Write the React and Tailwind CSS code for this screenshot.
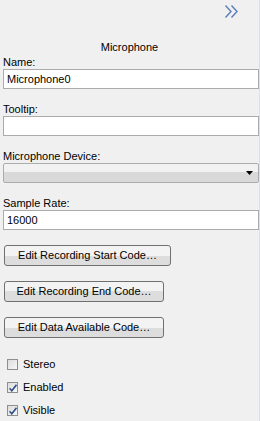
const font = { fontFamily: '"Liberation Sans", Arial, sans-serif' }

const Label = ({ children, className = '' }) => (
    <div className={`pl-[3px] text-[11px] leading-[13px] text-black ${className}`}>{children}</div>
)

const TextBox = ({ value }) => (
    <div className="ml-[3px] flex h-[20px] w-[256px] items-center border border-[#ababab] bg-white px-[3px] text-[11px] text-black">
        {value}
    </div>
)

const Button = ({ children, width }) => (
    <div
        className={`ml-[4px] flex h-[21px] ${width} items-center justify-center rounded-[3px] border border-[#707070] bg-gradient-to-b from-[#f3f3f3] from-50% to-[#dddddd] to-50% text-[11px] text-black`}
    >
        {children}
    </div>
)

const Check = ({ checked, label, className = '' }) => (
    <div className={`flex items-center pl-[7px] ${className}`}>
        <div className="relative h-[11px] w-[11px] border border-[#8f8f8f] bg-gradient-to-br from-[#dcdcdc] to-[#f8f8f8]">
            {checked && (
                <svg className="absolute left-[1px] top-[1px]" width="8" height="8" viewBox="0 0 8 8">
                    <path d="M0.5 4.2 L2.8 6.8 L7.5 0.8" fill="none" stroke="#2e4f86" strokeWidth="1.6" />
                </svg>
            )}
        </div>
        <span className="ml-[5px] text-[11px] leading-[13px] text-black">{label}</span>
    </div>
)

const App = () => {
    return (
        <div style={font} className="h-[421px] w-[260px] overflow-hidden border-r border-[#d8e0ec] bg-[#f0f0f0]">
            <div className="flex h-[24px] justify-end pr-[20px] pt-[4px]">
                <svg width="15" height="15" viewBox="0 0 15 15">
                    <path d="M1.5 1.5 L7 7.5 L1.5 13.5" fill="none" stroke="#5a7fb8" strokeWidth="1.4" />
                    <path d="M7.5 1.5 L13 7.5 L7.5 13.5" fill="none" stroke="#5a7fb8" strokeWidth="1.4" />
                </svg>
            </div>
            <div className="mt-[17px] text-center text-[11px] leading-[13px] text-black">Microphone</div>

            <Label className="mt-[2px]">Name:</Label>
            <TextBox value="Microphone0" />

            <Label className="mt-[14px]">Tooltip:</Label>
            <TextBox value="" />

            <Label className="mt-[14px]">Microphone Device:</Label>
            <div className="ml-[3px] flex h-[20px] w-[256px] items-center justify-end rounded-[2px] border border-[#acacac] bg-gradient-to-b from-[#f2f2f2] from-45% to-[#d9d9d9] to-45% pr-[5px]">
                <svg width="7" height="4" viewBox="0 0 7 4">
                    <path d="M0 0 L7 0 L3.5 4 Z" fill="#000" />
                </svg>
            </div>

            <Label className="mt-[14px]">Sample Rate:</Label>
            <TextBox value="16000" />

            <div className="mt-[15px] flex flex-col gap-[15px]">
                <Button width="w-[167px]">Edit Recording Start Code…</Button>
                <Button width="w-[160px]">Edit Recording End Code…</Button>
                <Button width="w-[160px]">Edit Data Available Code…</Button>
            </div>

            <div className="mt-[20px] flex flex-col gap-[10px]">
                <Check label="Stereo" />
                <Check checked label="Enabled" />
                <Check checked label="Visible" />
            </div>
        </div>
    )
}

export default App
